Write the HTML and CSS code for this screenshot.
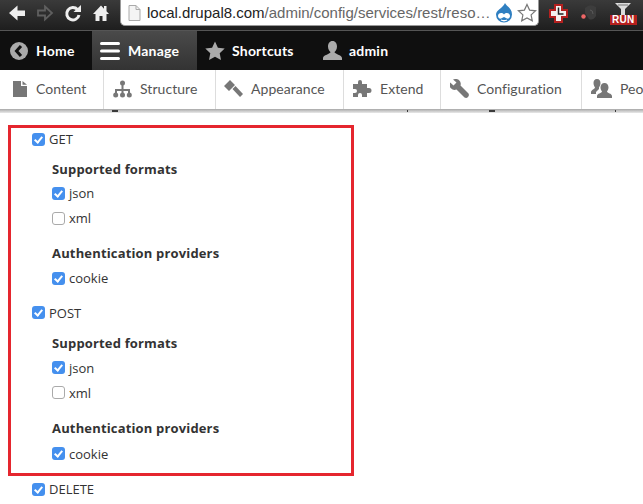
FILE: index.html
```html
<!DOCTYPE html>
<html lang="en">
<head>
  <meta charset="UTF-8">
  <title>REST resource</title>
  <link rel="stylesheet" href="styles.css">
</head>
<body>
  <!-- browser chrome -->
  <div class="browser">
    <svg class="nav-icon" width="20" height="20" viewBox="0 0 20 20"><path d="M10.500 2.500 2 10l8.500 7.500V13H18V7.500h-7.500z" fill="#eee"/></svg>
    <svg class="nav-icon" width="20" height="20" viewBox="0 0 20 20"><path d="M10 3.500l7 6.500-7 6.500v-4H3V7.500h7z" fill="none" stroke="#5f5f5f" stroke-width="1.800"/></svg>
    <svg class="nav-icon" width="20" height="20" viewBox="0 0 20 20"><path d="M14.500 6.500A6.200 6.200 0 1 0 16 12" fill="none" stroke="#eee" stroke-width="3"/><path d="M10.500 9h7.500V2z" fill="#eee"/></svg>
    <svg class="nav-icon" width="20" height="20" viewBox="0 0 20 20"><path d="M10 2.500 2 11h2.500v7H8.500v-5h3v5h4v-7H18l-2.500-2.700V3h-2.500v2.700z" fill="#eee"/></svg>
    <div class="urlbar">
      <svg class="page-icon" width="14" height="16" viewBox="0 0 14 16"><path d="M2 .5h7l4 4v11H2z" fill="#f4f4f4" stroke="#aaa"/><path d="M9 .5v4h4" fill="none" stroke="#aaa"/></svg>
      <span class="url">local.drupal8.com<span class="url-path">/admin/config/services/rest/reso…</span></span>
      <svg class="drop" width="18" height="20" viewBox="0 0 18 20"><path d="M10 0c1 3 7 5 7 11.500a8 8 0 0 1-16 0C1 7 8 5 10 0z" fill="#2f7fc1"/><path d="M3 13c0-3 4-4 6-1.500 2-2.500 6-1.500 6 1.500 0 2-2 3-3 2.500L9 14l-3 1.500c-1 .5-3-.5-3-2.500z" fill="#fff"/><path d="M6 17q3 1.500 6 0" fill="none" stroke="#fff" stroke-width="1.300"/></svg>
      <svg class="star-outline" width="20" height="20" viewBox="0 0 20 20"><path d="M10 1.500l2.600 5.600 6 .7-4.500 4.100 1.200 6L10 15l-5.300 2.900 1.200-6L1.400 7.800l6-.7z" fill="#fff" stroke="#777" stroke-width="1.200"/></svg>
    </div>
    <div class="extensions">
      <svg class="ext-clock" width="19" height="19" viewBox="0 0 19 19"><path d="M6 1h7v5h5v7h-5v5H6v-5H1V6h5z" fill="#f3f0ee" stroke="#b3201f" stroke-width="2"/><path d="M9.500 3.500v6.500h5" fill="none" stroke="#222" stroke-width="1.500"/></svg>
      <svg class="ext-elephant" width="16" height="18" viewBox="0 0 16 18"><path d="M4 4q5-5 11-1v9q-3 5-7 3L4 9z" fill="#3d3d3d"/><path d="M9 6q3 0 3 4" fill="none" stroke="#5a5a5a"/><circle cx="2.500" cy="12.500" r="2.200" fill="#e66"/></svg>
      <div class="run-ext">
        <svg width="16" height="13" viewBox="0 0 16 13"><path d="M0 1h16L10 7v6H6V7z" fill="#dcdcdc"/><path d="M3 3h10" stroke="#777"/></svg>
        <span class="run-label">RUN</span>
      </div>
    </div>
  </div>

  <!-- admin toolbar -->
  <div class="toolbar">
    <a class="bar-item home">
      <svg width="18" height="18" viewBox="0 0 18 18"><circle cx="9" cy="9" r="9" fill="#aaa"/><path d="M11 4 6.500 9l4.500 5" fill="none" stroke="#111" stroke-width="3"/></svg>
      Home
    </a>
    <a class="bar-item manage">
      <svg width="20" height="18" viewBox="0 0 20 18"><path d="M1.500 1.500h17M1.500 9h17M1.500 16.500h17" stroke="#fff" stroke-width="3" stroke-linecap="round"/></svg>
      Manage
    </a>
    <a class="bar-item shortcuts">
      <svg width="20" height="20" viewBox="0 0 20 20"><path d="M10 .5l2.900 6.300 6.800.8-5 4.700 1.300 6.800L10 15.700l-6 3.400 1.300-6.800-5-4.700 6.800-.8z" fill="#aaa"/></svg>
      Shortcuts
    </a>
    <a class="bar-item user">
      <svg width="19" height="20" viewBox="0 0 19 20"><path d="M9.500 0c3 0 4.500 2.500 4.500 5.500S12.500 10 11.500 11c0 2 7.500 3 7.500 6v2H0v-2c0-3 7.500-4 7.500-6-1-1-2.500-2.500-2.500-5.500S6.500 0 9.500 0z" fill="#aaa"/></svg>
      admin
    </a>
  </div>

  <!-- tray -->
  <div class="tray">
    <a class="tray-item content-link">
      <svg width="14" height="16" viewBox="0 0 14 16"><path d="M0 0h8v5h6v11H0zM9.500 0 14 3.700H9.500z" fill="#777"/></svg>
      Content
    </a>
    <a class="tray-item structure">
      <svg width="19" height="18" viewBox="0 0 19 18"><path d="M9.500 3v6M3 15v-5h13v5M9.500 9v6" fill="none" stroke="#777" stroke-width="2"/><circle cx="9.500" cy="3" r="2.500" fill="#777"/><circle cx="2.700" cy="15" r="2.500" fill="#777"/><circle cx="9.500" cy="15" r="2.500" fill="#777"/><circle cx="16.300" cy="15" r="2.500" fill="#777"/></svg>
      Structure
    </a>
    <a class="tray-item appearance">
      <svg width="20" height="18" viewBox="0 0 20 18"><path d="M6 0 0 6l5 5 6-6zM8.500 9l3-3 7.500 8-3 3z" fill="#777"/></svg>
      Appearance
    </a>
    <a class="tray-item extend">
      <svg width="20" height="18" viewBox="0 0 20 18"><path d="M0 4h5V2a2 2 0 0 1 4 0v2h5v4h2a2.500 2.500 0 0 1 0 5h-2v4H9v-2a2 2 0 0 0-4 0v2H0v-4h2a2 2 0 0 0 0-4H0z" fill="#777"/></svg>
      Extend
    </a>
    <a class="tray-item config">
      <svg width="19" height="19" viewBox="0 0 19 19"><path d="M5 0a5 5 0 0 1 5.500 6.500l8 8q1 2-.5 3.500t-3.500.5l-8-8A5 5 0 0 1 .2 3.500L3.500 6.500 6.500 3.500 3 .5z" fill="#777"/></svg>
      Configuration
    </a>
    <a class="tray-item people">
      <svg width="21" height="19" viewBox="0 0 21 19"><path d="M6 0c2.500 0 3.500 2 3.500 4S8.500 7.500 8 8.500V10L5 13v2H0v-2c0-2 4-3 4-4.500C3.500 7.500 2.500 6 2.500 4S3.500 0 6 0z" fill="#777"/><path d="M13.500 4c2.500 0 4 2 4 4.500 0 2-1 3-1.500 4 0 1.500 5 2 5 4.500v2H6v-2c0-2.500 5-3 5-4.500-.5-1-1.500-2-1.500-4C9.500 6 11 4 13.500 4z" fill="#777"/></svg>
      People
    </a>
  </div>
  <div class="tray-shadow">
    <i class="speck speck-a"></i>
    <i class="speck speck-b"></i>
    <i class="speck speck-c"></i>
    <i class="speck speck-d"></i>
  </div>

  <main class="content">
    <div class="highlight">
      <label class="check method"><span class="box on"></span>GET</label>
      <div class="method-options">
        <h4 class="group-title">Supported formats</h4>
        <label class="check"><span class="box on"></span>json</label>
        <label class="check"><span class="box"></span>xml</label>
        <h4 class="group-title second">Authentication providers</h4>
        <label class="check"><span class="box on"></span>cookie</label>
      </div>
      <label class="check method"><span class="box on"></span>POST</label>
      <div class="method-options post">
        <h4 class="group-title">Supported formats</h4>
        <label class="check"><span class="box on"></span>json</label>
        <label class="check"><span class="box"></span>xml</label>
        <h4 class="group-title second">Authentication providers</h4>
        <label class="check"><span class="box on"></span>cookie</label>
      </div>
    </div>
    <label class="check method delete"><span class="box on"></span>DELETE</label>
  </main>
</body>
</html>
```

FILE: styles.css
```css
html, body {
  margin: 0;
  height: 504px;
  overflow: hidden;
}
body {
  font-family: "Lato", "Open Sans", sans-serif;
  background: #fff;
  color: #222;
}
svg {
  display: block;
  flex: none;
}

/* browser chrome */
.browser {
  display: flex;
  align-items: center;
  height: 30px;
  padding-left: 7px;
  background: linear-gradient(#3a3a3a, #1e1e1e);
  border-bottom: 1px solid #555;
}
.nav-icon {
  margin: 0 8px 4px 0;
}
.urlbar {
  display: flex;
  flex: none;
  align-self: flex-start;
  align-items: center;
  width: 419px;
  height: 26px;
  margin-left: 1px;
  background: #fff;
  border: 1px solid #999;
  border-top: 0;
  border-radius: 0 0 5px 5px;
  box-sizing: border-box;
}
.page-icon {
  margin: 0 6px;
}
.url {
  flex: 1;
  min-width: 0;
  overflow: hidden;
  font-family: "Liberation Sans", sans-serif;
  font-size: 15px;
  white-space: nowrap;
  color: #222;
}
.url-path {
  color: #666;
}
.drop {
  margin: 0 4px 0 5px;
}
.star-outline {
  margin-right: 1px;
}
.extensions {
  display: flex;
  align-items: center;
  margin: 0 0 4px 10px;
}
.ext-clock {
  margin-right: 13px;
}
.ext-elephant {
  margin-right: 13px;
}
.run-ext {
  display: flex;
  flex-direction: column;
  align-items: center;
}
.run-label {
  padding: 0 2px;
  background: #b5201e;
  color: #fff;
  font: bold 10px/10px "Liberation Sans", sans-serif;
  letter-spacing: .3px;
}

/* toolbar */
.toolbar {
  display: flex;
  height: 39px;
  background: #0f0f0f;
}
.bar-item {
  display: flex;
  align-items: center;
  gap: 8px;
  color: #fff;
  font-size: 14px;
  font-weight: 700;
  letter-spacing: .2px;
}
.home {
  width: 92px;
  padding-left: 10px;
  box-sizing: border-box;
}
.manage {
  width: 105px;
  padding-left: 8px;
  box-sizing: border-box;
  background: linear-gradient(#4a4a4a, #333);
}
.shortcuts {
  width: 126px;
  padding-left: 8px;
  gap: 7px;
  box-sizing: border-box;
}
.user {
  gap: 7px;
}

/* tray */
.tray {
  display: flex;
  height: 39px;
  background: #fff;
  overflow: hidden;
}
.tray-item {
  display: flex;
  align-items: center;
  flex: none;
  gap: 9px;
  height: 100%;
  padding-bottom: 2px;
  box-sizing: border-box;
  border-right: 1px solid #ddd;
  color: #555;
  font-size: 14px;
  letter-spacing: .05px;
}
.content-link {
  width: 104px;
  padding-left: 13px;
}
.structure {
  width: 112px;
  padding-left: 9px;
  gap: 8px;
}
.appearance {
  width: 128px;
  padding-left: 8px;
  gap: 7px;
}
.extend {
  width: 97px;
  padding-left: 9px;
  gap: 7px;
}
.config {
  width: 141px;
  padding-left: 9px;
  gap: 8px;
}
.people {
  border-right: 0;
  padding-left: 9px;
  gap: 8px;
}
.tray-shadow {
  position: relative;
  height: 4px;
  background: linear-gradient(#a8a8a8, #e9e9e9);
}
.speck {
  position: absolute;
  top: 1px;
  height: 2px;
  background: #3a3a3a;
}
.speck-a {
  left: 112px;
  width: 6px;
}
.speck-b {
  left: 407px;
  width: 1px;
}
.speck-c {
  left: 489px;
  width: 6px;
}
.speck-d {
  left: 615px;
  width: 1px;
}

/* form */
.content {
  padding: 12px 8px 0;
  font-family: "Open Sans", sans-serif;
}
.highlight {
  width: 346px;
  height: 351px;
  box-sizing: border-box;
  padding-left: 21px;
  border: 3px solid #e5262e;
}
.check {
  display: flex;
  align-items: center;
  gap: 4px;
  height: 25px;
  font-size: 13px;
  color: #333;
}
.method {
  height: 22px;
}
.box {
  flex: none;
  width: 13px;
  height: 13px;
  box-sizing: border-box;
  border: 1px solid #aaa;
  border-radius: 3px;
  background: #fff;
}
.box.on {
  border: 0;
  background: #4590ee;
  position: relative;
}
.box.on::after {
  content: "";
  position: absolute;
  left: 4px;
  top: 2px;
  width: 3px;
  height: 6px;
  border: solid #fff;
  border-width: 0 2px 2px 0;
  transform: rotate(40deg);
}
.method-options {
  padding: 0 0 11px 20px;
}
.group-title {
  margin: 10px 0 2.500px;
  font-size: 13px;
  font-weight: 700;
  letter-spacing: .16px;
  line-height: 18px;
  color: #333;
}
.group-title.second {
  margin: 13.500px 0 3.500px;
}
.post .group-title {
  margin-bottom: 3.500px;
}
.post .group-title.second {
  margin-bottom: 4.500px;
}
.delete {
  margin: 2px 0 0 24px;
}
```
